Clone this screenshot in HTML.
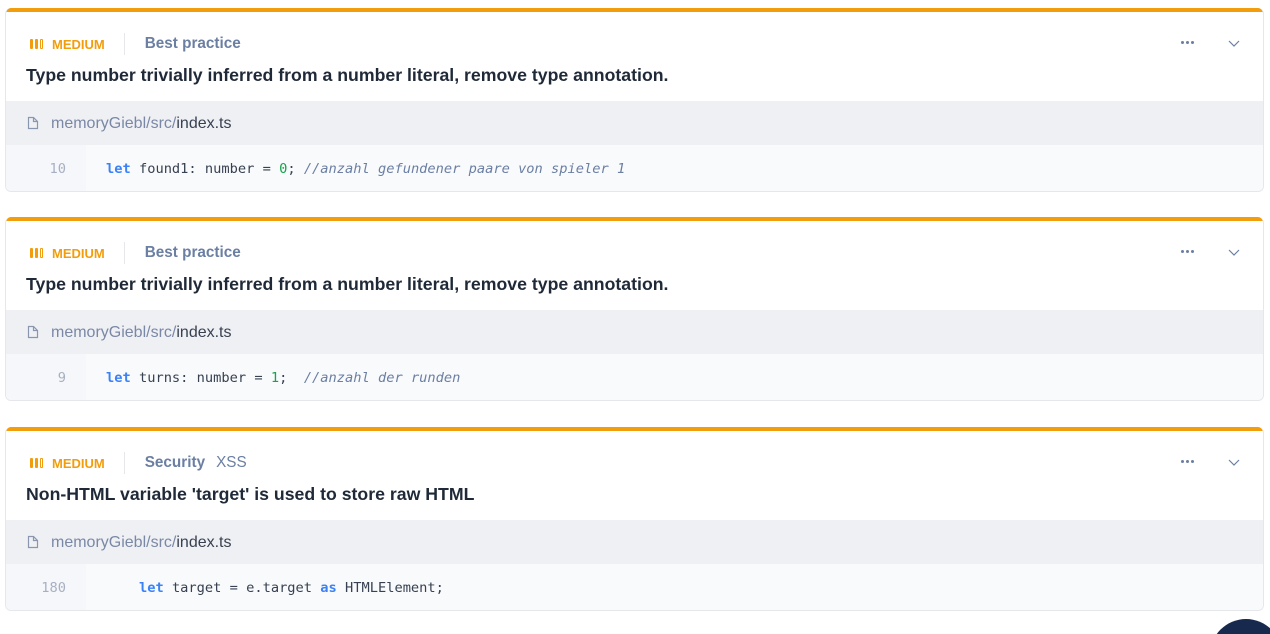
<!DOCTYPE html>
<html><head><meta charset="utf-8"><style>
*{box-sizing:border-box;margin:0;padding:0}
html,body{width:1270px;height:634px;overflow:hidden}
body{background:#fff;font-family:"Liberation Sans",sans-serif;position:relative}
.card{position:absolute;left:5px;width:1259px;height:184px;border:1px solid #e5e7eb;border-top:none;border-radius:6px;overflow:hidden;background:#fff}
.card:before{content:"";position:absolute;left:0;right:0;top:0;height:4px;background:#f29d0c}
.hdr{position:absolute;top:28px;left:24px;height:16px;display:flex;align-items:center}
.bars{display:flex;gap:2px;margin-right:9px}
.bars i{display:block;width:3px;height:10px;background:#f29d0c;border-radius:1px}
.bars i.e{background:none;border:1px solid #f29d0c}
.med{color:#f29d0c;font-size:13px;font-weight:bold}
.sep{width:1px;height:22px;background:#e5e7eb;margin:0 20px 0 19px}
.cat{color:#6b7fa3;font-size:15.3px;font-weight:bold}
.sub{color:#6b7fa3;font-size:15.3px;margin-left:11px}
.title{position:absolute;top:57px;left:20px;font-size:17.7px;font-weight:bold;color:#1f2937}
.dots{position:absolute;top:33px;right:69px;display:flex;gap:2px}
.dots i{width:3px;height:3px;border-radius:50%;background:#6b7fa3;display:block}
.chev{position:absolute;top:28px;right:22px}
.path{position:absolute;top:93px;left:0;right:0;height:44px;background:#eff0f4;font-size:16px;color:#7a88a6;padding:14px 0 0 45px}
.path b{font-weight:normal;color:#374151}
.path svg{position:absolute;left:21px;top:15px}
.code{position:absolute;top:137px;left:0;right:0;bottom:0;background:#f9fafc}
.gut{position:absolute;left:0;top:0;bottom:0;width:80px;background:#f6f7fa;text-align:right;padding:16px 20px 0 0;color:#a7b0c2;font-family:"DejaVu Sans Mono",monospace;font-size:13.7px}
.ln{position:absolute;left:100px;top:16px;font-family:"DejaVu Sans Mono",monospace;font-size:13.7px;color:#374151;white-space:pre}
.k{color:#3b82f6;font-weight:bold}.n{color:#16a34a}.c{color:#6b7fa3;font-style:italic}
</style></head><body>
<div class="card" style="top:8px">
<div class="hdr"><span class="bars"><i></i><i></i><i class="e"></i></span><span class="med">MEDIUM</span><span class="sep"></span><span class="cat">Best practice</span></div>
<div class="dots"><i></i><i></i><i></i></div>
<svg class="chev" width="14" height="14" viewBox="0 0 14 14"><path d="M2 5l5 5 5-5" fill="none" stroke="#6b7fa3" stroke-width="1.2"/></svg>
<div class="title">Type number trivially inferred from a number literal, remove type annotation.</div>
<div class="path"><svg width="12" height="14" viewBox="0 0 12 14"><path d="M1.5 1.5h5l4 4v7h-9z M6.5 1.5v4h4" fill="none" stroke="#8a96b0" stroke-width="1.2"/></svg>memoryGiebl/src/<b>index.ts</b></div>
<div class="code"><div class="gut">10</div><div class="ln"><span class="k">let</span> found1: number = <span class="n">0</span>; <span class="c">//anzahl gefundener paare von spieler 1</span></div></div>
</div>
<div class="card" style="top:217px">
<div class="hdr"><span class="bars"><i></i><i></i><i class="e"></i></span><span class="med">MEDIUM</span><span class="sep"></span><span class="cat">Best practice</span></div>
<div class="dots"><i></i><i></i><i></i></div>
<svg class="chev" width="14" height="14" viewBox="0 0 14 14"><path d="M2 5l5 5 5-5" fill="none" stroke="#6b7fa3" stroke-width="1.2"/></svg>
<div class="title">Type number trivially inferred from a number literal, remove type annotation.</div>
<div class="path"><svg width="12" height="14" viewBox="0 0 12 14"><path d="M1.5 1.5h5l4 4v7h-9z M6.5 1.5v4h4" fill="none" stroke="#8a96b0" stroke-width="1.2"/></svg>memoryGiebl/src/<b>index.ts</b></div>
<div class="code"><div class="gut">9</div><div class="ln"><span class="k">let</span> turns: number = <span class="n">1</span>;  <span class="c">//anzahl der runden</span></div></div>
</div>
<div class="card" style="top:427px">
<div class="hdr"><span class="bars"><i></i><i></i><i class="e"></i></span><span class="med">MEDIUM</span><span class="sep"></span><span class="cat">Security</span><span class="sub">XSS</span></div>
<div class="dots"><i></i><i></i><i></i></div>
<svg class="chev" width="14" height="14" viewBox="0 0 14 14"><path d="M2 5l5 5 5-5" fill="none" stroke="#6b7fa3" stroke-width="1.2"/></svg>
<div class="title">Non-HTML variable 'target' is used to store raw HTML</div>
<div class="path"><svg width="12" height="14" viewBox="0 0 12 14"><path d="M1.5 1.5h5l4 4v7h-9z M6.5 1.5v4h4" fill="none" stroke="#8a96b0" stroke-width="1.2"/></svg>memoryGiebl/src/<b>index.ts</b></div>
<div class="code"><div class="gut">180</div><div class="ln">    <span class="k">let</span> target = e.target <span class="k">as</span> HTMLElement;</div></div>
</div>
<div style="position:absolute;left:1200px;top:619px;width:70px;height:15px;overflow:hidden"><div style="position:absolute;left:10px;top:0;width:72px;height:72px;border-radius:50%;background:#172a4e"></div></div>
</body></html>
